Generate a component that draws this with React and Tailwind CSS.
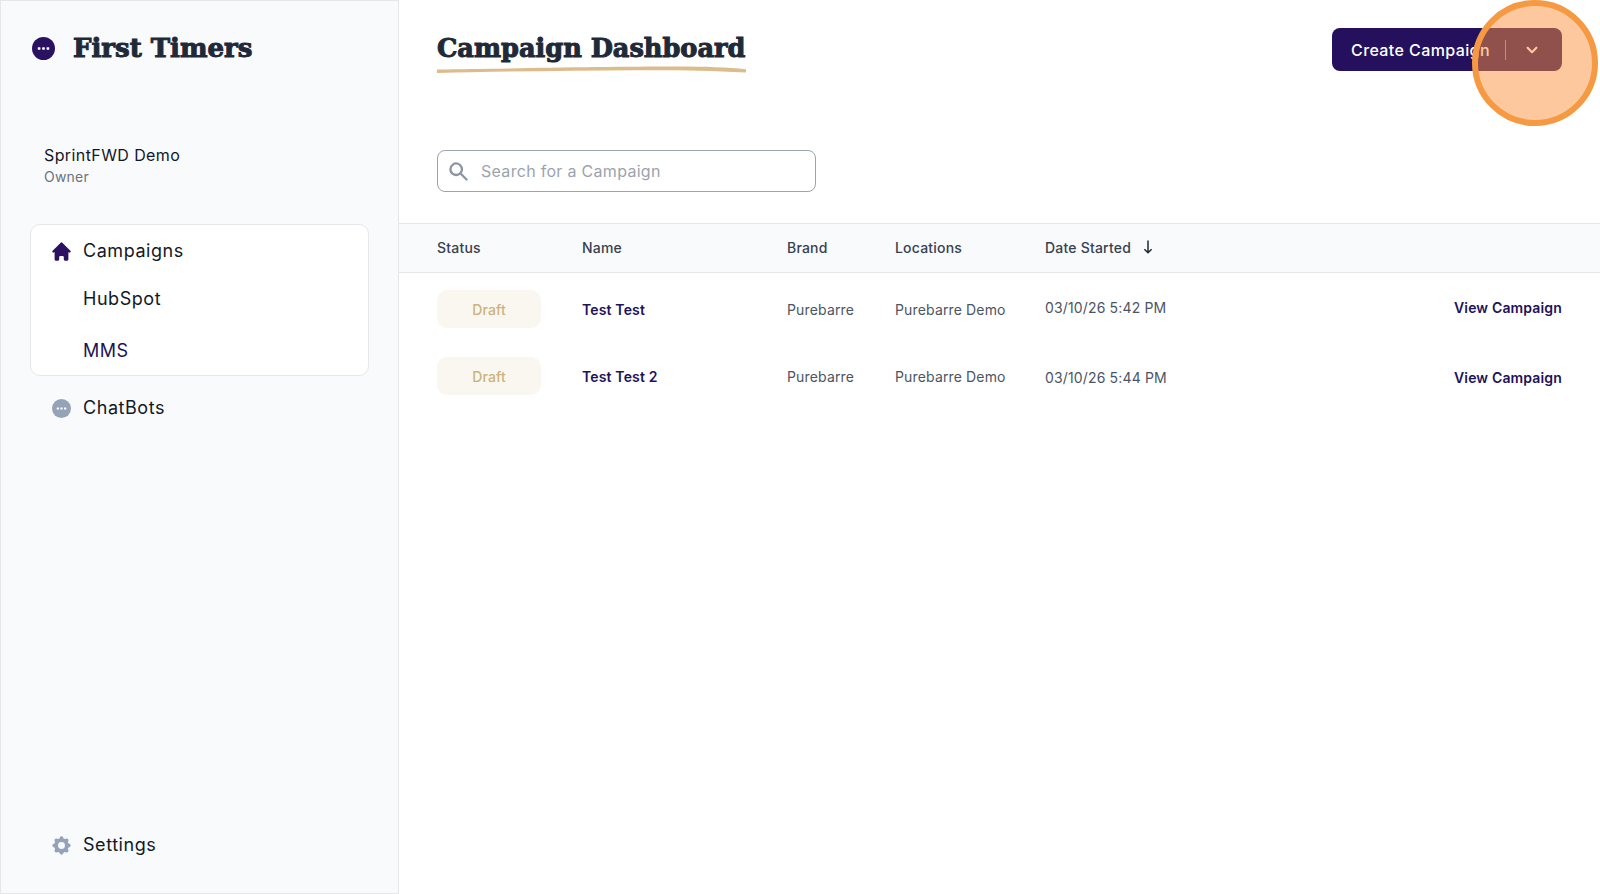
import { HiHome, HiSearch, HiChevronDown, HiCog } from 'react-icons/hi'

const ROWS = [
  { name: 'Test Test', date: '03/10/26 5:42 PM', shift: 'mb-[4px]' },
  { name: 'Test Test 2', date: '03/10/26 5:44 PM', shift: 'mt-[3px]' },
]

function DotsIcon({ className }) {
  return (
    <svg viewBox="0 0 24 24" className={className}>
      <circle cx="12" cy="12" r="12" fill="currentColor" />
      <rect x="6" y="10.6" width="2.8" height="2.8" rx="0.5" fill="#fff" />
      <rect x="10.6" y="10.6" width="2.8" height="2.8" rx="0.5" fill="#fff" />
      <rect x="15.2" y="10.6" width="2.8" height="2.8" rx="0.5" fill="#fff" />
    </svg>
  )
}

function SortArrow() {
  return (
    <svg viewBox="0 0 10 14" className="w-[10px] h-[14px] text-[#1f2937]" fill="none" stroke="currentColor" strokeWidth="1.5">
      <path d="M5 .5v12.3M1.4 9.2 5 12.8l3.6-3.6" />
    </svg>
  )
}

function Sidebar() {
  return (
    <aside className="w-[399px] h-[894px] shrink-0 flex flex-col bg-[#f9fafc] border border-[#e5e7eb] pl-[29px] pr-[29px]">
      <div className="flex items-center mt-[35px] ml-[2px]">
        <DotsIcon className="w-[23px] h-[23px] text-[#2a1261]" />
        <span className="ml-[18px] font-['DejaVu_Serif',serif] font-bold text-[26px] leading-[24px] text-[#1f2937] [-webkit-text-stroke:1px_#1f2937]">
          First Timers
        </span>
      </div>

      <div className="mt-[83px] ml-[14px]">
        <p className="text-[16px] tracking-[0.4px] leading-[24px] text-[#111827]">SprintFWD Demo</p>
        <p className="text-[14px] tracking-[0.2px] leading-[19px] text-[#6b7280]">Owner</p>
      </div>

      <div className="mt-[38px] h-[152px] bg-white border border-[#e5e7eb] rounded-[10px] pt-[13px]">
        <div className="flex items-center h-[26px] pl-[19px] gap-[10px]">
          <HiHome className="w-[23px] h-[23px] text-[#2a1261]" />
          <span className="text-[18px] tracking-[0.55px] leading-[26px] text-[#111827]">Campaigns</span>
        </div>
        <p className="mt-[22px] pl-[52px] text-[18px] tracking-[0.55px] leading-[26px] text-[#111827]">HubSpot</p>
        <p className="mt-[26px] pl-[52px] text-[18px] tracking-[0.55px] leading-[26px] text-[#1e1259]">MMS</p>
      </div>

      <div className="flex items-center mt-[19px] h-[26px] pl-[22px] gap-[12px]">
        <DotsIcon className="w-[19px] h-[19px] text-[#94a3b8]" />
        <span className="text-[18px] tracking-[0.55px] leading-[26px] text-[#111827]">ChatBots</span>
      </div>

      <div className="mt-auto mb-[35px] flex items-center h-[26px] pl-[20px] gap-[10px]">
        <HiCog className="w-[23px] h-[23px] text-[#94a3b8]" />
        <span className="text-[18px] tracking-[0.55px] leading-[26px] text-[#111827]">Settings</span>
      </div>
    </aside>
  )
}

function Header() {
  return (
    <div className="flex items-start justify-between pl-[38px] pr-[38px] h-[150px]">
      <div className="mt-[31px]">
        <h1 className="font-['DejaVu_Serif',serif] font-bold text-[25.6px] leading-[34px] text-[#1f2937] [-webkit-text-stroke:1px_#1f2937] whitespace-nowrap">
          Campaign Dashboard
        </h1>
        <svg viewBox="0 0 309 7" className="w-[309px] h-[7px] block mt-[1px]">
          <path d="M0 3.4C70 2.6 170 .6 240 .6c30 0 50 .8 69 2.6v3.4C270 4.4 240 4 200 4.2 130 4.6 60 5.6 0 7Z" fill="#dcbc8a" />
        </svg>
      </div>
      <button className="mt-[28px] w-[230px] h-[43px] flex items-center bg-[#24105c] rounded-lg text-white">
        <span className="pl-[19px] text-[16px] tracking-[0.4px] font-medium leading-[24px] whitespace-nowrap">Create Campaign</span>
        <span className="ml-[15px] w-px h-[20px] bg-white/50" />
        <HiChevronDown className="ml-[15px] w-[22px] h-[22px]" />
      </button>
    </div>
  )
}

function CampaignTable() {
  return (
    <div className="mt-[31px]">
      <div className="grid grid-cols-[145px_205px_108px_150px_1fr] items-center h-[50px] pl-[38px] pr-[38px] pb-[2px] bg-[#f9fafb] border-y border-[#e5e7eb] text-[14px] tracking-[0.2px] font-medium text-[#374151]">
        <span>Status</span>
        <span>Name</span>
        <span>Brand</span>
        <span>Locations</span>
        <span className="flex items-center gap-[12px]">
          Date Started
          <SortArrow />
        </span>
      </div>
      <div className="pt-[17px] flex flex-col gap-[29px]">
        {ROWS.map((row) => (
          <div key={row.name} className="grid grid-cols-[145px_205px_108px_150px_1fr_auto] items-center h-[38px] pl-[38px] pr-[38px] text-[14px] tracking-[0.15px] text-[#4b5563]">
            <span className="w-[104px] h-[38px] flex items-center justify-center rounded-[10px] bg-[#faf7f0] text-[#cdb27c] font-medium">Draft</span>
            <span className="font-semibold text-[#1e1259]">{row.name}</span>
            <span>Purebarre</span>
            <span>Purebarre Demo</span>
            <span className={row.shift}>{row.date}</span>
            <span className={`font-semibold text-[#1e1259] ${row.shift}`}>View Campaign</span>
          </div>
        ))}
      </div>
    </div>
  )
}

export default function App() {
  return (
    <div className="relative w-[1600px] h-[894px] overflow-hidden flex bg-white font-['Inter',sans-serif]">
      <Sidebar />
      <main className="flex-1 min-w-0">
        <Header />
        <div className="ml-[38px] w-[379px] h-[42px] flex items-center bg-white border border-[#9ca3af] rounded-lg px-[9px]">
          <HiSearch className="w-[23px] h-[23px] text-[#8b95a3]" />
          <span className="ml-[11px] text-[16px] tracking-[0.3px] text-[#9ca3af]">Search for a Campaign</span>
        </div>
        <CampaignTable />
      </main>
      {/* orange click marker */}
      <div className="absolute left-[1472px] top-0 w-[126px] h-[126px] rounded-full border-[6px] border-[#f59a42] bg-[#fb923c]/50" />
    </div>
  )
}
